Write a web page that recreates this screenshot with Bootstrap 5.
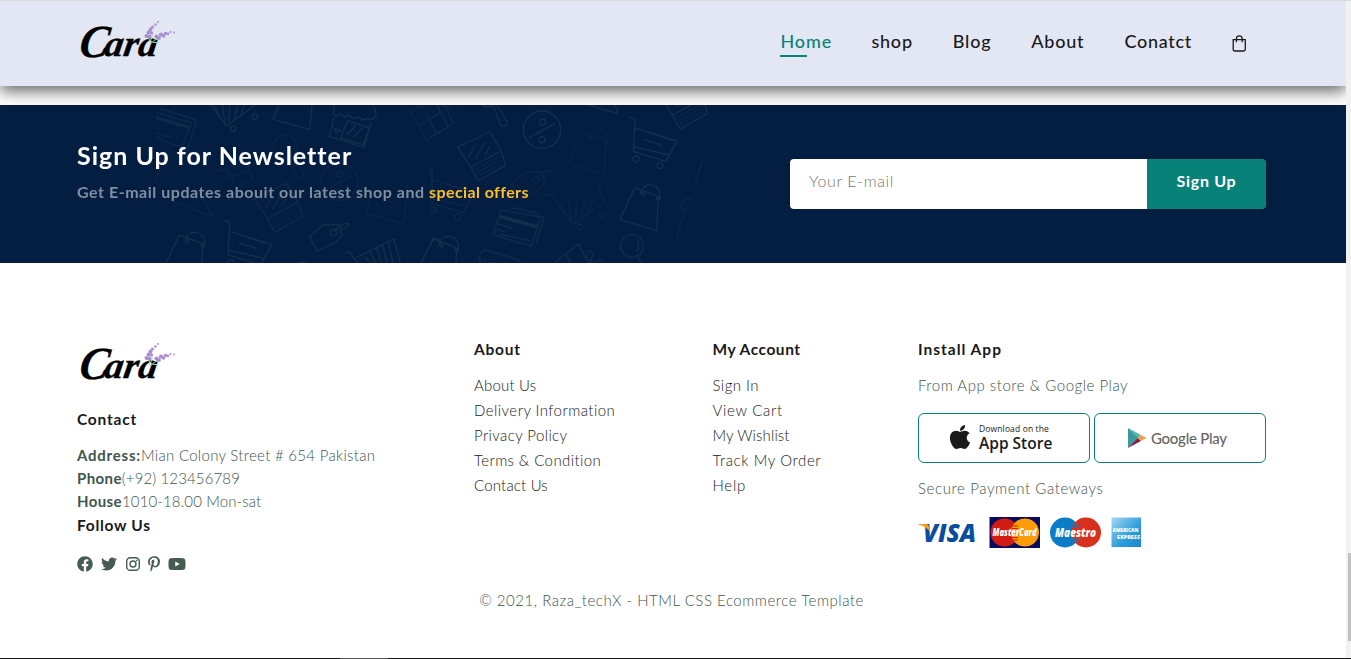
<!DOCTYPE html>
<html lang="en">
<head>
<meta charset="utf-8">
<meta name="viewport" content="width=device-width, initial-scale=1">
<title>Cara</title>
<link href="https://cdn.jsdelivr.net/npm/bootstrap@5.3.0/dist/css/bootstrap.min.css" rel="stylesheet">
<style>
body{font-family:Lato,"Open Sans",sans-serif;background:#fff;color:#1a1a1a;height:659px;overflow:hidden}
.page-frame{height:658px;border-top:1px solid #dadada}
.page-body{width:1346px;overflow:hidden}
.scroll-rail{width:5px;background:#f1f1f1;padding:552px 0 0 2px}
.scroll-thumb{height:88px;background:#c1c1c1}
.window-edge{height:1px;background:#1a1a1a;padding-left:340px}
.window-edge div{width:48px;height:1px;background:#555}
.site-nav{height:85px;background:#e3e6f3;box-shadow:0 5px 15px rgba(0,0,0,.62);padding:0 99px 5px 77px}
.site-nav ul{gap:40px}
.site-nav .nav-link{padding:0;font-size:18px;font-weight:500;color:#1a1a1a;line-height:30px}
.site-nav .nav-link.active{color:#088178;width:51px}
.nav-link.active::after{content:"";position:absolute;left:0;bottom:-1px;width:27px;height:2px;background:#088178}
.brand-mark{width:100px;height:44px;overflow:visible;display:block}
.wordmark{font-family:"Liberation Serif",serif;font-style:italic;font-weight:700;stroke:#000;stroke-width:.3px}
.news{height:158px;margin-top:19px;background:#041e42;padding:0 80px 0 77px}
.news h4{font-size:25px;font-weight:700;line-height:30px;color:#fff;margin:0 0 10px}
.news-copy{padding-top:35px}
.news p{font-size:16px;font-weight:700;line-height:24px;color:#818ea0;margin:0}
.news p span+span{color:#ffbd27}
.pattern{left:0;top:0;width:1346px;height:158px;pointer-events:none}
.news form{width:476px;height:50px;margin-top:54px}
.news input.form-control{border:0;border-radius:4px 0 0 4px;padding:0 20px 7px 19px;font-size:16px}
.news input::placeholder{color:#757575;font-weight:300;opacity:1}
.news .btn{width:119px;background:#088178;border:0;border-radius:0 4px 4px 0;color:#fff;font-size:16px;font-weight:700;padding:0 0 7px}
.foot{padding:76px 80px 0 77px}
.foot h6{font-size:15.5px;font-weight:700;line-height:20px;margin:0 0 14px;color:#1a1a1a}
.foot p,.foot a{font-size:15px;font-weight:300;color:#40554c;line-height:25px;margin:0;white-space:nowrap}
.foot a{color:#1a1a1a;text-decoration:none;display:block}
.foot .brand-mark{margin-top:2px}
.foot h6.contact-head{margin-bottom:15px}
.foot .contact-line{line-height:23px}
.foot h6.follow-head{margin:2px 0 21px}
.foot .copyright{margin-top:16px}
.contact-line b{font-weight:700}
.w-contact{width:397px}.w-about{width:238.500px}.w-account{width:205.500px}.w-install{width:348px}
.social{gap:8.300px}
.social svg{height:16px;fill:#465b52}
.store-row{margin:15px 0 13px}
.store{width:172px;height:50px;border:1px solid #088178;border-radius:6px}
.store-apple{padding:0 0 2px 30px}
.store-google{padding-left:32px}
.store-small{font:400 8.5px/12px "Open Sans",sans-serif}
.store-big{font:600 15.5px/16px "Open Sans",sans-serif}
.store-play{font:500 15px/20px Lato,sans-serif;color:#666}
.pay{margin-top:15px}
.pay text{font-family:"Open Sans","Liberation Sans",sans-serif;font-weight:800;font-style:italic}
.pay .amex-text text{font-style:normal}
.k0{letter-spacing:.13px}.k2{letter-spacing:.18px}.k3{letter-spacing:.3px}.k4{letter-spacing:.4px}.k45{letter-spacing:.45px}.k5{letter-spacing:.53px}.k6{letter-spacing:.61px}.k7{letter-spacing:.71px}.k8{letter-spacing:.78px}.k9{letter-spacing:.92px}.k10{letter-spacing:1px}.kn{letter-spacing:-.27px}
</style>
</head>
<body>
<svg width="0" height="0" class="position-absolute">
<defs>
<symbol id="cara" viewBox="0 0 100 44">
<text class="wordmark" x="0" y="37.500" font-size="46" textLength="29" lengthAdjust="spacingAndGlyphs" transform="translate(7 0) skewX(-9)">C</text>
<text class="wordmark" x="26" y="37.500" font-size="37" textLength="53" lengthAdjust="spacingAndGlyphs" transform="translate(6 0) skewX(-9)">ara</text>
<g transform="translate(3.500 0)"><g fill="none" stroke="#a9dfae" stroke-width="1"><path d="M69 24Q70 21 67 18M71 24Q74 20 78 20M72 23L78 24M70 22L72 16"/></g>
<g fill="#a98fcf"><circle cx="66" cy="17" r="2"/><circle cx="69" cy="17.500" r="1.900"/><circle cx="68" cy="13.500" r="2"/><circle cx="71" cy="14" r="1.700"/><circle cx="70" cy="10.500" r="2"/><circle cx="72" cy="8" r="1.600"/><circle cx="75" cy="5.500" r="1.200"/><circle cx="77.500" cy="3" r=".9"/><circle cx="76" cy="17.500" r="2.100"/><circle cx="78.500" cy="19" r="1.900"/><circle cx="80.500" cy="15.500" r="2.100"/><circle cx="83" cy="17" r="1.800"/><circle cx="85" cy="14.500" r="1.800"/><circle cx="87.500" cy="14.800" r="1.400"/><circle cx="90" cy="13" r="1"/><circle cx="93.500" cy="13.500" r=".9"/></g></g>
</symbol>
</defs>
</svg>
<div class="page-frame d-flex">
<div class="page-body">
<header class="site-nav d-flex align-items-center justify-content-between position-relative">
<svg class="brand-mark"><use href="#cara"/></svg>
<ul class="nav align-items-center flex-nowrap">
<li><span class="nav-link active position-relative k9">Home</span></li>
<li><span class="nav-link k8">shop</span></li>
<li><span class="nav-link k8">Blog</span></li>
<li><span class="nav-link k8">About</span></li>
<li><span class="nav-link k7">Conatct</span></li>
<li class="pt-1"><svg class="d-block" width="15" height="17" viewBox="0 0 15 17" fill="none" stroke="#1a1a1a" stroke-width="1.300"><path d="M1.200 4.700H13.300V14.300Q13.300 16 11.600 16H2.900Q1.200 16 1.200 14.300Z"/><path d="M4.400 7.200V3.800A2.900 2.900 0 0 1 10.200 3.800V7.200"/></svg></li>
</ul>
</header>
<section class="news position-relative d-flex justify-content-between">
<svg class="pattern position-absolute" viewBox="0 105 1346 158" fill="none" stroke="#152f4f" stroke-width="4" stroke-linejoin="round" aria-hidden="true">
<defs>
<g id="hatch"><path d="M205 5L260 78L352 10M222 10L237 45M245 5L255 68M270 2L266 70M295 0L284 57M320 -2L304 42M205 5L198 -10L172 -14M352 10L335 -45"/><circle cx="345" cy="50" r="8"/><circle cx="279" cy="86" r="8"/></g>
<g id="bag"><path d="M100 405L55 500L165 535L170 432ZM118 424V418A28 28 0 0 1 174 434V438"/><circle cx="124" cy="424" r="5"/><circle cx="170" cy="438" r="5"/></g>
<g id="laptop"><path d="M342 295L440 250L475 310L487 350L405 397L382 355ZM382 355L473 307M375 325L395 290M396 330L425 280M425 318L440 292"/><path stroke-dasharray="3 4" d="M394 362L465 325M400 372L470 335M406 382L474 345"/></g>
<g id="cart"><path d="M252 362L270 366L264 465L362 494L395 433L271 395M312 408L378 430M295 428L350 446M264 450L372 475"/><circle cx="272" cy="487" r="9"/><circle cx="344" cy="507" r="9"/></g>
<g id="tag"><path d="M508 410L550 375L597 374L606 404L590 425L532 453ZM581 397Q600 370 626 370Q630 378 604 388"/><circle cx="581" cy="397" r="10"/></g>
<g id="percent"><circle cx="598" cy="245" r="56"/><circle cx="600" cy="222" r="9"/><circle cx="598" cy="275" r="9"/><path d="M560 268L638 226"/></g>
<g id="gift"><path d="M812 35L880 -5L925 80L858 120ZM845 15L890 100M835 78L902 38M880 -5L898 -14L940 68L925 80M902 10Q910 -15 928 5Q940 25 906 20"/></g>
</defs>
<svg x="156" y="105" width="284" height="158" viewBox="156 105 284 158">
<g transform="translate(140 100) scale(.3333)">
<g opacity=".7"><path d="M60 25L170 60L138 165M50 38L154 69L126 140L40 116M40 96L90 112M46 110L72 118"/><path stroke-width="10" d="M40 50L146 82"/></g>
<use href="#hatch"/><path d="M418 14L398 58L510 88L516 14"/>
<path d="M584 10L580 42Q592 54 602 40Q614 58 628 45Q640 62 654 50Q668 66 682 54Q698 64 709 46L700 10M582 52L568 110L672 142L694 68M622 62L688 84L670 134L602 114ZM576 82L606 94M620 105L648 75M640 112L668 84"/><circle cx="590" cy="94" r="5"/>
<use href="#gift" opacity=".5"/>
<g opacity=".6"><circle cx="435" cy="140" r="35"/><path d="M462 166L492 220Q492 238 476 236Q468 232 450 176"/><use href="#percent"/>
<path opacity=".6" d="M775 98Q788 84 800 98Q800 112 782 124L700 158M782 124L800 175L740 165"/>
<path d="M230 215L320 183L338 238L292 262M262 204L282 250M240 240L330 212M95 305L220 350L165 262M40 195Q70 180 95 205M60 210L30 295"/>
<path d="M705 240L680 340L790 372L805 240M870 205L880 300M880 322L882 340"/></g>
<use href="#laptop" opacity=".9"/><use href="#tag"/><use href="#bag" transform="translate(18 0)"/><use href="#cart"/>
<path d="M608 462L628 456L662 500M650 472L762 417L784 500M675 470L700 500M690 455L712 500M710 445L728 500M728 435L744 500M745 426L762 500"/>
<path d="M475 485L560 498"/><use href="#bag" transform="translate(780 8)"/>
</g></svg>
<svg x="430" y="105" width="300" height="158" viewBox="430 105 300 158">
<g transform="translate(430 100) scale(.3333)">
<use href="#gift" transform="translate(-870 0)" opacity=".7"/><path d="M155 14Q170 24 190 18L212 76Q232 86 232 66L200 15M465 12L560 40Q568 34 550 10"/>
<use href="#percent" transform="translate(-262 -156)"/><use href="#laptop" transform="translate(-260 -154)"/>
<g opacity=".6"><use href="#bag" transform="translate(358 -310)" opacity=".7"/><use href="#tag" transform="translate(-262 -158)"/><use href="#hatch" transform="translate(170 296)"/><path d="M5 210L8 270"/><use href="#cart" transform="translate(-262 -156)"/></g>
<use href="#cart" transform="translate(346 -310)"/><use href="#laptop" transform="translate(345 -310)"/><use href="#bag" transform="translate(515 -142)"/>
<path d="M212 330L342 352L318 430M240 322L330 340M212 330L190 405L304 438L330 355M204 372L250 386M200 388L226 396M210 402L300 422"/><path stroke-width="11" d="M210 350L322 380"/>
<use href="#bag" transform="translate(-90 12)"/><path d="M160 500Q135 470 162 448L262 478Q276 484 270 500M160 480Q175 500 190 485Q205 505 222 490M375 485L425 448L445 432L482 500M408 462L425 500M470 480Q470 445 486 455Q492 470 476 490L515 480"/>
<circle cx="606" cy="437" r="34"/><path d="M622 420Q632 440 618 455M622 468L640 500"/>
<path opacity=".6" d="M820 175L796 250M785 298Q755 290 752 325Q765 338 778 315M765 330L740 412L752 415"/>
</g></svg>
</svg>
<div class="news-copy position-relative">
<h4 class="k10">Sign Up for Newsletter</h4>
<p><span class="k5">Get E-mail updates abouit our latest shop and </span><span class="k4">special offers</span></p>
</div>
<form class="d-flex position-relative">
<input class="form-control k6" type="text" placeholder="Your E-mail" aria-label="Your E-mail">
<button class="btn flex-shrink-0 k7" type="button">Sign Up</button>
</form>
</section>
<footer class="foot">
<div class="d-flex">
<div class="w-contact">
<svg class="brand-mark mb-4"><use href="#cara"/></svg>
<h6 class="contact-head k8">Contact</h6>
<p class="contact-line"><b class="k8">Address:</b><span class="k3">Mian Colony Street # 654 Pakistan</span></p>
<p class="contact-line"><b class="k4">Phone</b><span class="k0">(+92) 123456789</span></p>
<p class="contact-line"><b class="k4">House</b><span class="k0">1010-18.00 Mon-sat</span></p>
<h6 class="follow-head k7">Follow Us</h6>
<div class="social d-flex align-items-center">
<svg width="16" viewBox="0 0 512 512"><path d="M504 256C504 119 393 8 256 8S8 119 8 256c0 123.780 90.690 226.380 209.250 245V327.690h-63V256h63v-54.640c0-62.150 37-96.480 93.670-96.480 27.140 0 55.520 4.840 55.520 4.840v61h-31.280c-30.800 0-40.410 19.120-40.410 38.730V256h68.780l-11 71.690h-57.780V501C413.310 482.380 504 379.780 504 256z"/></svg>
<svg width="16" viewBox="0 0 512 512"><path d="M459.370 151.716c.325 4.548.325 9.097.325 13.645 0 138.720-105.583 298.558-298.558 298.558-59.452 0-114.680-17.219-161.137-47.106 8.447.974 16.568 1.299 25.340 1.299 49.055 0 94.213-16.568 130.274-44.832-46.132-.975-84.792-31.188-98.112-72.772 6.498.974 12.995 1.624 19.818 1.624 9.421 0 18.843-1.300 27.614-3.573-48.081-9.747-84.143-51.980-84.143-102.985v-1.299c13.969 7.797 30.214 12.670 47.431 13.319-28.264-18.843-46.781-51.005-46.781-87.391 0-19.492 5.197-37.360 14.294-52.954 51.655 63.675 129.300 105.258 216.365 109.807-1.624-7.797-2.599-15.918-2.599-24.040 0-57.828 46.782-104.934 104.934-104.934 30.213 0 57.502 12.670 76.670 33.137 23.715-4.548 46.456-13.320 66.599-25.340-7.798 24.366-24.366 44.833-46.132 57.827 21.117-2.273 41.584-8.122 60.426-16.243-14.292 20.791-32.161 39.308-52.628 54.253z"/></svg>
<svg width="14" viewBox="0 0 14 16"><g fill="none" stroke="#465b52" stroke-width="1.400"><rect x=".7" y="1.700" width="12.600" height="12.600" rx="3.600"/><circle cx="7" cy="8" r="3"/></g><circle cx="10.700" cy="4.300" r=".9"/></svg>
<svg width="12" viewBox="0 0 384 512"><path d="M204 6.500C101.400 6.500 0 74.900 0 185.600 0 256 39.600 296 63.600 296c9.900 0 15.600-27.600 15.600-35.400 0-9.300-23.700-29.100-23.700-67.800 0-80.400 61.200-137.400 140.400-137.400 68.100 0 118.500 38.700 118.500 109.800 0 53.100-21.300 152.700-90.300 152.700-24.900 0-46.200-18-46.200-43.800 0-37.800 26.400-74.400 26.400-113.400 0-66.200-93.900-54.200-93.900 25.800 0 16.800 2.100 35.400 9.600 50.700-13.800 59.400-42 147.900-42 209.100 0 18.900 2.700 37.500 4.500 56.400 3.400 3.800 1.700 3.400 6.900 1.500 50.400-69 48.600-82.500 71.400-172.800 12.300 23.400 44.100 36 69.300 36 106.200 0 153.900-103.500 153.900-196.800C384 71.300 298.200 6.500 204 6.500z"/></svg>
<svg width="18" viewBox="0 0 576 512"><path d="M549.655 124.083c-6.281-23.650-24.787-42.276-48.284-48.597C458.781 64 288 64 288 64S117.220 64 74.629 75.486c-23.497 6.322-42.003 24.947-48.284 48.597-11.412 42.867-11.412 132.305-11.412 132.305s0 89.438 11.412 132.305c6.281 23.650 24.787 41.500 48.284 47.821C117.220 448 288 448 288 448s170.780 0 213.371-11.486c23.497-6.321 42.003-24.171 48.284-47.821 11.412-42.867 11.412-132.305 11.412-132.305s0-89.438-11.412-132.305zm-317.510 213.508V175.185l142.739 81.205-142.739 81.201z"/></svg>
</div>
</div>
<div class="w-about">
<h6 class="k8">About</h6>
<a class="k2">About Us</a><a class="k45">Delivery Information</a><a class="k4">Privacy Policy</a><a class="k4">Terms &amp; Condition</a><a class="k2">Contact Us</a>
</div>
<div class="w-account">
<h6 class="k5">My Account</h6>
<a class="k45">Sign In</a><a class="k7">View Cart</a><a class="k0">My Wishlist</a><a class="k6">Track My Order</a><a class="k8">Help</a>
</div>
<div class="w-install">
<h6 class="k10">Install App</h6>
<p class="k5">From App store &amp; Google Play</p>
<div class="store-row d-flex gap-1">
<div class="store store-apple d-flex align-items-center">
<svg width="22" height="24" viewBox="0 32 384 448" fill="#1a1a1a" class="me-1"><path d="M318.700 268.700c-.2-36.700 16.400-64.400 50-84.800-18.800-26.900-47.200-41.700-84.700-44.600-35.500-2.800-74.300 20.700-88.500 20.700-15 0-49.400-19.700-76.400-19.700C63.300 141.200 4 184.800 4 273.500q0 39.300 14.400 81.200c12.800 36.700 59 126.700 107.200 125.200 25.200-.6 43-17.900 75.800-17.900 31.800 0 48.300 17.900 76.400 17.900 48.600-.7 90.400-82.500 102.600-119.300-65.200-30.700-61.700-90-61.700-91.900zm-56.600-164.200c27.300-32.400 24.800-61.900 24-72.500-24.100 1.400-52 16.400-67.900 34.900-17.500 19.800-27.800 44.300-25.600 71.900 26.100 2 49.900-11.400 69.500-34.300z"/></svg>
<div class="ps-1"><div class="store-small k0">Download on the</div><div class="store-big">App Store</div></div>
</div>
<div class="store store-google d-flex align-items-center">
<svg width="20" height="22" viewBox="0 0 20 22" class="me-1"><path fill="#3d9a9c" d="M1 1L12 11L1 21Z"/><path fill="#58b8a9" d="M1 1L14 8L11 11Z"/><path fill="#8b1c4b" d="M1 21L11 11L14 14Z"/><path fill="#f0a04b" d="M14 8L19.500 11L14 14L10.500 11Z"/></svg>
<span class="store-play kn">Google Play</span>
</div>
</div>
<p class="k6">Secure Payment Gateways</p>
<svg class="pay d-block" width="226" height="33" viewBox="918 515.500 226 33">
<text x="923" y="541" font-size="24" fill="#0a4d9c" textLength="53" lengthAdjust="spacingAndGlyphs">VISA</text>
<path fill="#f7a11a" d="M919 523.500H926Q928.500 523.500 929 526L930.500 532Q926 525.500 919 524.500Z"/>
<rect x="989.500" y="516.500" width="50.500" height="31" fill="#0a0a5e"/><circle cx="1004.500" cy="532" r="14" fill="#d01c12"/><circle cx="1025" cy="532" r="14" fill="#fb9d0b"/><path stroke="#d01c12" d="M1012 525.500H1018M1012 528H1018M1012 537H1018M1012 539.500H1018"/>
<text x="992.500" y="535.500" font-size="10" fill="#fff" textLength="44" lengthAdjust="spacingAndGlyphs">MasterCard</text>
<circle cx="1065" cy="532" r="15" fill="#0b7dc6"/><circle cx="1086" cy="532" r="15" fill="#d9301e"/><path stroke="#0b7dc6" d="M1072 524H1079M1072 527H1079M1072 538H1079M1072 541H1079"/>
<text x="1055" y="536" font-size="11.500" fill="#fff" textLength="41" lengthAdjust="spacingAndGlyphs">Maestro</text>
<defs><linearGradient id="amex" x1="0" y1="0" x2="1" y2="1"><stop offset="0" stop-color="#a5d7f3"/><stop offset=".6" stop-color="#2a9ddb"/><stop offset="1" stop-color="#1a86cb"/></linearGradient></defs>
<rect x="1111.500" y="517" width="29.500" height="29.500" fill="url(#amex)"/>
<g class="amex-text" fill="#fff" font-size="5.500"><text x="1112.500" y="531" textLength="26" lengthAdjust="spacingAndGlyphs">AMERICAN</text><text x="1117" y="538" textLength="23" lengthAdjust="spacingAndGlyphs">EXPRESS</text></g>
</svg>
</div>
</div>
<p class="copyright text-center k5">© 2021, Raza_techX - HTML CSS Ecommerce Template</p>
</footer>
</div>
<div class="scroll-rail"><div class="scroll-thumb"></div></div>
</div>
<div class="window-edge"><div></div></div>
</body></html>
